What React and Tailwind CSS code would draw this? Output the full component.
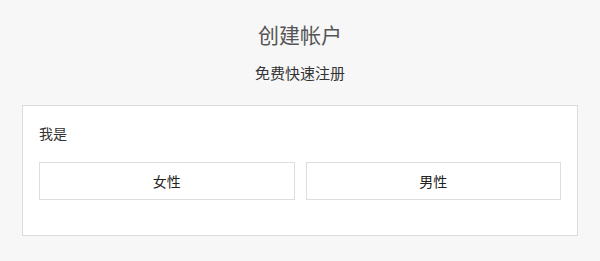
export default function App() {
  return (
    <div
      className="min-h-screen bg-[#f7f7f7] pt-[20px]"
      style={{ fontFamily: '"Noto Sans CJK SC", "Noto Sans", sans-serif' }}
    >
      <h1 className="text-center text-[21px] leading-[28px] font-normal text-[#555]">
        创建帐户
      </h1>
      <p className="mt-[15px] text-center text-[15px] leading-[20px] text-[#333]">
        免费快速注册
      </p>

      <div className="mx-[22px] mt-[22px] border border-[#dcdcdc] bg-white px-[16px] pt-[17px] pb-[35px]">
        <div className="text-[14px] leading-[20px] text-[#333]">我是</div>
        <div className="mt-[19px] grid grid-cols-2 gap-[11px]">
          <button className="h-[38px] border border-[#dedede] bg-white text-[14px] text-[#222]">
            女性
          </button>
          <button className="h-[38px] border border-[#dedede] bg-white text-[14px] text-[#222]">
            男性
          </button>
        </div>
      </div>
    </div>
  );
}
